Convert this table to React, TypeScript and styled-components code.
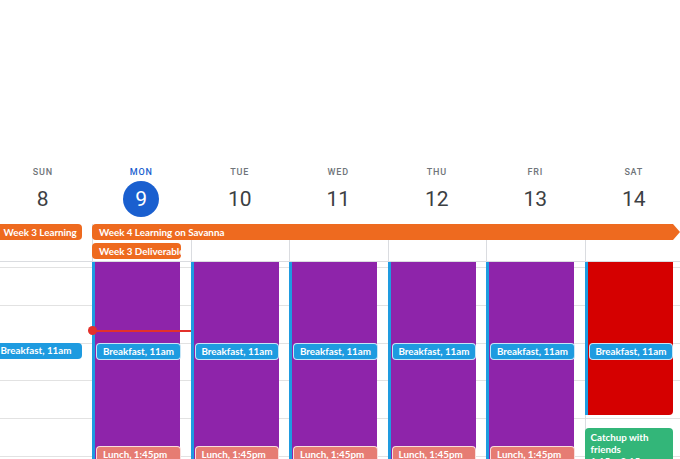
import React from "react";
import styled, { createGlobalStyle, css } from "styled-components";

const COL = 98.5;
const HOUR = 37.8;
const START_HOUR = 8.857;
const EVENT_FONT = `Lato, Roboto, "Liberation Sans", Arial, sans-serif`;
const EVENT_SIZE = "9.8px";

const GlobalStyle = createGlobalStyle`
  *, *::before, *::after { box-sizing: border-box; }
  html, body { margin: 0; padding: 0; background: #fff; overflow: hidden; }
  body {
    width: 680px;
    height: 459px;
    font-family: Roboto, "Liberation Sans", Arial, sans-serif;
  }
`;

const Page = styled.div`
  width: ${COL * 7}px;
  margin-left: -6.5px;
  padding-top: 166px;
`;

const HeaderRow = styled.div`
  display: grid;
  grid-template-columns: repeat(7, ${COL}px);
`;

const DayHead = styled.div`
  display: flex;
  flex-direction: column;
  align-items: center;
`;

const DayName = styled.div<{ $today?: boolean }>`
  font-size: 9px;
  line-height: 12px;
  font-weight: 500;
  letter-spacing: 0.8px;
  color: ${(p) => (p.$today ? "#1a5fcf" : "#70757a")};
`;

const DateNum = styled.div<{ $today?: boolean }>`
  margin-top: 3px;
  width: 36px;
  height: 36px;
  border-radius: 50%;
  display: flex;
  align-items: center;
  justify-content: center;
  font-size: 21px;
  font-weight: 400;
  color: ${(p) => (p.$today ? "#fff" : "#3c4043")};
  background: ${(p) => (p.$today ? "#1a5fcf" : "transparent")};
`;

const AllDay = styled.div`
  display: grid;
  grid-template-columns: repeat(7, ${COL}px);
  grid-template-rows: 16px 18px;
  row-gap: 3px;
  padding-top: 7px;
  border-bottom: 1px solid #dadce0;
`;

const AllDayCell = styled.div<{ $col: number }>`
  grid-column: ${(p) => p.$col};
  grid-row: 1 / -1;
  border-left: 1px solid #dadce0;
`;

const Bar = styled.div<{ $col: number; $span: number; $row: number; $arrow?: boolean; $inset?: number }>`
  grid-column: ${(p) => p.$col} / span ${(p) => p.$span};
  grid-row: ${(p) => p.$row};
  align-self: start;
  height: 16px;
  margin-left: ${(p) => p.$inset ?? 0}px;
  margin-right: ${(p) => (p.$arrow ? 3 : 10)}px;
  padding: 0 7px;
  background: #ee6a1f;
  color: #fff;
  font-family: ${EVENT_FONT};
  font-size: ${EVENT_SIZE};
  font-weight: 700;
  line-height: 16px;
  white-space: nowrap;
  overflow: hidden;
  border-radius: 4px;
  ${(p) =>
    p.$arrow &&
    css`
      border-radius: 4px 0 0 4px;
      clip-path: polygon(0 0, calc(100% - 7px) 0, 100% 50%, calc(100% - 7px) 100%, 0 100%);
    `}
`;

const TimeGrid = styled.div`
  display: grid;
  grid-template-columns: repeat(7, ${COL}px);
  height: 197px;
  overflow: hidden;
`;

const DayColumn = styled.div`
  position: relative;
  border-left: 1px solid #dadce0;
  background-image: repeating-linear-gradient(
    to bottom,
    #e2e2e2 0 1px,
    transparent 1px ${HOUR}px
  );
  background-position: 0 5px;
`;

const Block = styled.div<{ $bg: string; $edge?: boolean; $roundBottom?: boolean }>`
  position: absolute;
  left: -1px;
  width: calc(100% - 9.5px);
  background: ${(p) => p.$bg};
  border-left: ${(p) => (p.$edge ? "3px solid #1e9be0" : "none")};
  border-radius: ${(p) => (p.$roundBottom ? "0 0 4px 0" : "0")};
`;

const Chip = styled.div<{ $bg: string; $inset: number; $outlined?: boolean }>`
  position: absolute;
  left: ${(p) => p.$inset - 1}px;
  right: 10px;
  background: ${(p) => p.$bg};
  border: ${(p) => (p.$outlined ? "1px solid rgba(255,255,255,0.75)" : "none")};
  border-radius: 4px;
  padding: 0 ${(p) => (p.$outlined ? 6 : 7)}px;
  color: #fff;
  font-family: ${EVENT_FONT};
  font-size: ${EVENT_SIZE};
  font-weight: 700;
  line-height: 15px;
  white-space: nowrap;
  overflow: hidden;
`;

const Card = styled.div<{ $bg: string }>`
  position: absolute;
  left: -1px;
  right: 10px;
  background: ${(p) => p.$bg};
  border-radius: 4px;
  padding: 3px 6px;
  color: #fff;
  font-family: ${EVENT_FONT};
  font-size: ${EVENT_SIZE};
  font-weight: 700;
  line-height: 12px;
  overflow: hidden;
`;

const CardTime = styled.div`
  font-weight: 700;
`;

const NowLine = styled.div`
  position: absolute;
  left: -1px;
  right: 0;
  height: 2px;
  background: #e3312b;
  z-index: 3;
  &::before {
    content: "";
    position: absolute;
    left: -4.5px;
    top: -3.5px;
    width: 9px;
    height: 9px;
    border-radius: 50%;
    background: #e3312b;
  }
`;

const y = (h: number) => (h - START_HOUR) * HOUR;

const days = [
  { name: "SUN", num: 8 },
  { name: "MON", num: 9, today: true },
  { name: "TUE", num: 10 },
  { name: "WED", num: 11 },
  { name: "THU", num: 12 },
  { name: "FRI", num: 13 },
  { name: "SAT", num: 14 },
];

type Ev =
  | { kind: "block"; bg: string; start: number; end: number; round?: boolean }
  | { kind: "chip"; bg: string; start: number; h: number; title: string; inset: number; outlined?: boolean }
  | { kind: "card"; bg: string; start: number; end: number; title: string; time: string }
  | { kind: "now"; at: number };

const PURPLE = "#8e24aa";
const BLUE = "#1e9be0";
const CORAL = "#e67c73";

const weekday = (): Ev[] => [
  { kind: "block", bg: PURPLE, start: 7, end: 15 },
  { kind: "chip", bg: BLUE, start: 11, h: 17, title: "Breakfast, 11am", inset: 4, outlined: true },
  { kind: "chip", bg: CORAL, start: 13.72, h: 20, title: "Lunch, 1:45pm", inset: 4, outlined: true },
];

const columns: Ev[][] = [
  [{ kind: "chip", bg: BLUE, start: 11, h: 16, title: "Breakfast, 11am", inset: 0 }],
  [...weekday(), { kind: "now", at: 10.65 }],
  weekday(),
  weekday(),
  weekday(),
  weekday(),
  [
    { kind: "block", bg: "#d50000", start: 7, end: 12.9, round: true },
    { kind: "chip", bg: BLUE, start: 11, h: 17, title: "Breakfast, 11am", inset: 4, outlined: true },
    { kind: "card", bg: "#33b679", start: 13.25, end: 14.25, title: "Catchup with friends", time: "1:15 – 2:15pm" },
  ],
];

function renderEvent(ev: Ev, i: number) {
  switch (ev.kind) {
    case "block": {
      const top = Math.max(0, y(ev.start));
      return (
        <Block
          key={i}
          $bg={ev.bg}
          $edge
          $roundBottom={ev.round}
          style={{ top, height: y(ev.end) - top }}
        />
      );
    }
    case "chip":
      return (
        <Chip key={i} $bg={ev.bg} $inset={ev.inset} $outlined={ev.outlined} style={{ top: y(ev.start), height: ev.h }}>
          {ev.title}
        </Chip>
      );
    case "card":
      return (
        <Card key={i} $bg={ev.bg} style={{ top: y(ev.start), height: y(ev.end) - y(ev.start) }}>
          {ev.title}
          <CardTime>{ev.time}</CardTime>
        </Card>
      );
    case "now":
      return <NowLine key={i} style={{ top: y(ev.at) }} />;
  }
}

export default function App() {
  return (
    <>
      <GlobalStyle />
      <Page>
        <HeaderRow>
          {days.map((d) => (
            <DayHead key={d.name}>
              <DayName $today={d.today}>{d.name}</DayName>
              <DateNum $today={d.today}>{d.num}</DateNum>
            </DayHead>
          ))}
        </HeaderRow>
        <AllDay>
          {days.map((d, i) => (
            <AllDayCell key={d.name} $col={i + 1} />
          ))}
          <Bar $col={1} $span={1} $row={1} $inset={3}>Week 3 Learning</Bar>
          <Bar $col={2} $span={6} $row={1} $arrow>Week 4 Learning on Savanna</Bar>
          <Bar $col={2} $span={1} $row={2}>Week 3 Deliverables</Bar>
        </AllDay>
        <TimeGrid>
          {columns.map((evs, c) => (
            <DayColumn key={c}>{evs.map(renderEvent)}</DayColumn>
          ))}
        </TimeGrid>
      </Page>
    </>
  );
}
